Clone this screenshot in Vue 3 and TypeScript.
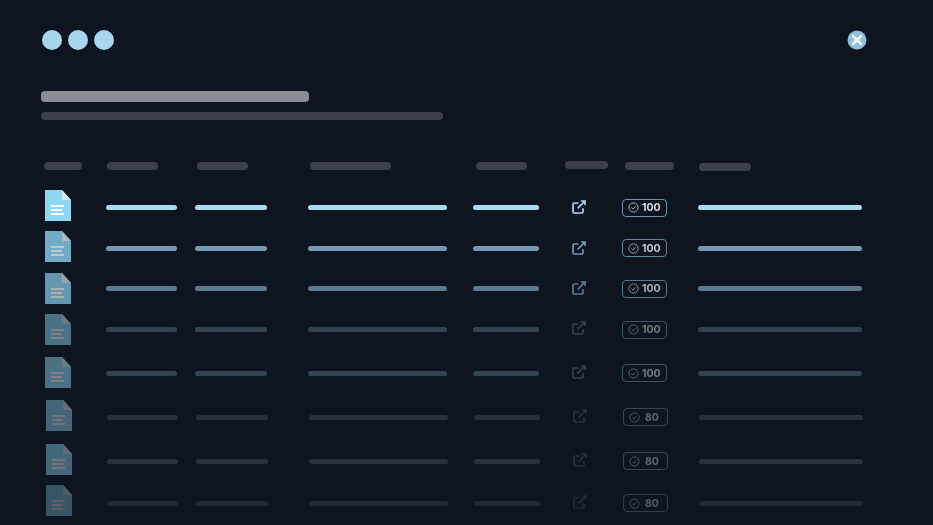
<script setup lang="ts">
interface Row {
  h: number
  shift: number
  color: string
  iconOp: number
  score: number
  badgeOp: number
  lift: number
  docLift: number
}
const rows: Row[] = [
  { h: 41, shift: 0, color: '#a9daf2', iconOp: 1, score: 100, badgeOp: 1, lift: 1, docLift: 5 },
  { h: 40, shift: 0, color: '#759bb3', iconOp: 0.78, score: 100, badgeOp: 0.9, lift: 1, docLift: 3 },
  { h: 41, shift: 0, color: '#5c7a92', iconOp: 0.68, score: 100, badgeOp: 0.78, lift: 1, docLift: 1 },
  { h: 41, shift: 0, color: '#344352', iconOp: 0.48, score: 100, badgeOp: 0.5, lift: 3, docLift: 1 },
  { h: 46, shift: 0, color: '#344352', iconOp: 0.48, score: 100, badgeOp: 0.5, lift: 3, docLift: 1 },
  { h: 42, shift: 1, color: '#27323e', iconOp: 0.42, score: 80, badgeOp: 0.4, lift: 3, docLift: 3 },
  { h: 46, shift: 1, color: '#27323e', iconOp: 0.42, score: 80, badgeOp: 0.4, lift: 3, docLift: 3 },
  { h: 38, shift: 1, color: '#202a36', iconOp: 0.33, score: 80, badgeOp: 0.35, lift: 3, docLift: 5 },
]
const headers = [38, 51, 51, 81, 51, 43, 49, 52]
</script>

<template>
  <div class="page">
    <div class="top">
      <div class="dots">
        <span class="dot"></span>
        <span class="dot"></span>
        <span class="dot"></span>
      </div>
      <svg class="close" viewBox="0 0 20 20" width="20" height="20" aria-label="Close">
        <circle cx="10" cy="10" r="9.5" fill="#8cc0d8" />
        <path d="M6 6l8 8M14 6l-8 8" stroke="#f2f8fb" stroke-width="2.6" stroke-linecap="round" />
      </svg>
    </div>

    <div class="title"></div>
    <div class="subtitle"></div>

    <div class="head">
      <span v-for="(w, i) in headers" :key="i" class="head-pill" :style="{ width: w + 'px' }"></span>
    </div>

    <div
      v-for="(r, i) in rows"
      :key="i"
      class="row"
      :style="{ height: r.h + 'px', marginLeft: r.shift + 'px', '--line': r.color }"
    >
      <svg
        class="doc"
        viewBox="0 0 26 31"
        width="26"
        height="31"
        :style="{ opacity: r.iconOp, marginBottom: r.docLift + 'px' }"
      >
        <path d="M0 0H17L26 10V31H0Z" fill="#8ed6f2" />
        <path d="M17 0L26 10H17Z" fill="#d3eaf3" />
        <path d="M6 16H19M6 20H17M6 24H19" stroke="#f4fbfe" stroke-width="2" />
      </svg>
      <span class="line w71"></span>
      <span class="line w72"></span>
      <span class="line w139"></span>
      <span class="line w66"></span>
      <svg
        class="ext"
        viewBox="0 0 24 24"
        width="16"
        height="16"
        fill="none"
        :stroke="r.color"
        stroke-width="2.5"
        :style="{ marginBottom: r.lift + 'px' }"
      >
        <path d="M18 14v5a2 2 0 0 1-2 2H5a2 2 0 0 1-2-2V8a2 2 0 0 1 2-2h6" />
        <path d="M15 3h6v6M10 14L21 3" />
      </svg>
      <span class="badge" :style="{ opacity: r.badgeOp }">
        <svg viewBox="0 0 12 12" width="11" height="11" fill="none" stroke="#b8c2ca" stroke-width="1">
          <circle cx="6" cy="6" r="5" />
          <path d="M3.8 6.2l1.6 1.5 2.8-3" />
        </svg>
        <b class="score" :class="{ low: r.score < 100 }">{{ r.score }}</b>
      </span>
      <span class="line w164"></span>
    </div>
  </div>
</template>

<style>
html,
body {
  margin: 0;
  background: #0e1520;
}
</style>

<style scoped>
.page {
  width: 933px;
  height: 525px;
  box-sizing: border-box;
  overflow: hidden;
  padding: 30px 0 0 41px;
  background: #0e1520;
  filter: blur(0.5px);
}
.top {
  display: flex;
  align-items: flex-start;
  justify-content: space-between;
  width: 826px;
  height: 21px;
  padding-left: 1px;
  box-sizing: border-box;
}
.dots {
  display: flex;
  gap: 6px;
}
.dot {
  width: 20px;
  height: 20px;
  border-radius: 50%;
  background: #a9d6ee;
}
.close {
  display: block;
}
.title {
  width: 268px;
  height: 11px;
  margin-top: 40px;
  border-radius: 4px;
  background: #8a8d94;
}
.subtitle {
  width: 402px;
  height: 8px;
  margin-top: 10px;
  border-radius: 4px;
  background: #3c404b;
}
.head {
  display: flex;
  align-items: center;
  height: 9px;
  margin: 41px 0 17px 3px;
}
.head-pill {
  flex: none;
  height: 8px;
  border-radius: 4px;
  background: #3c404b;
}
.head-pill:nth-child(1) { margin-right: 25px; }
.head-pill:nth-child(2) { margin-right: 39px; }
.head-pill:nth-child(3) { margin-right: 62px; }
.head-pill:nth-child(4) { margin-right: 85px; }
.head-pill:nth-child(5) { margin-right: 38px; }
.head-pill:nth-child(6) { margin: 0 17px 2px 0; }
.head-pill:nth-child(7) { margin-right: 25px; }
.head-pill:nth-child(8) { margin-top: 2px; }
.row {
  display: grid;
  grid-template-columns: 61px 89px 113px 165px 98px 51px 76px 164px;
  align-items: center;
  padding-left: 4px;
  box-sizing: border-box;
}
.line {
  display: block;
  height: 5px;
  border-radius: 2.5px;
  background: var(--line);
}
.w71 { width: 71px; }
.w72 { width: 72px; }
.w139 { width: 139px; }
.w66 { width: 66px; }
.w164 { width: 164px; }
.doc {
  display: block;
}
.ext {
  display: block;
}
.badge {
  display: flex;
  align-items: center;
  gap: 3px;
  width: 45px;
  height: 18px;
  padding-left: 5px;
  box-sizing: border-box;
  border: 1.3px solid #6f92aa;
  border-radius: 4px;
}
.score {
  font: 700 10.5px Inter, "Liberation Sans", Arial, sans-serif;
  color: #d8dde2;
}
.score.low {
  margin-left: 2px;
}
</style>
